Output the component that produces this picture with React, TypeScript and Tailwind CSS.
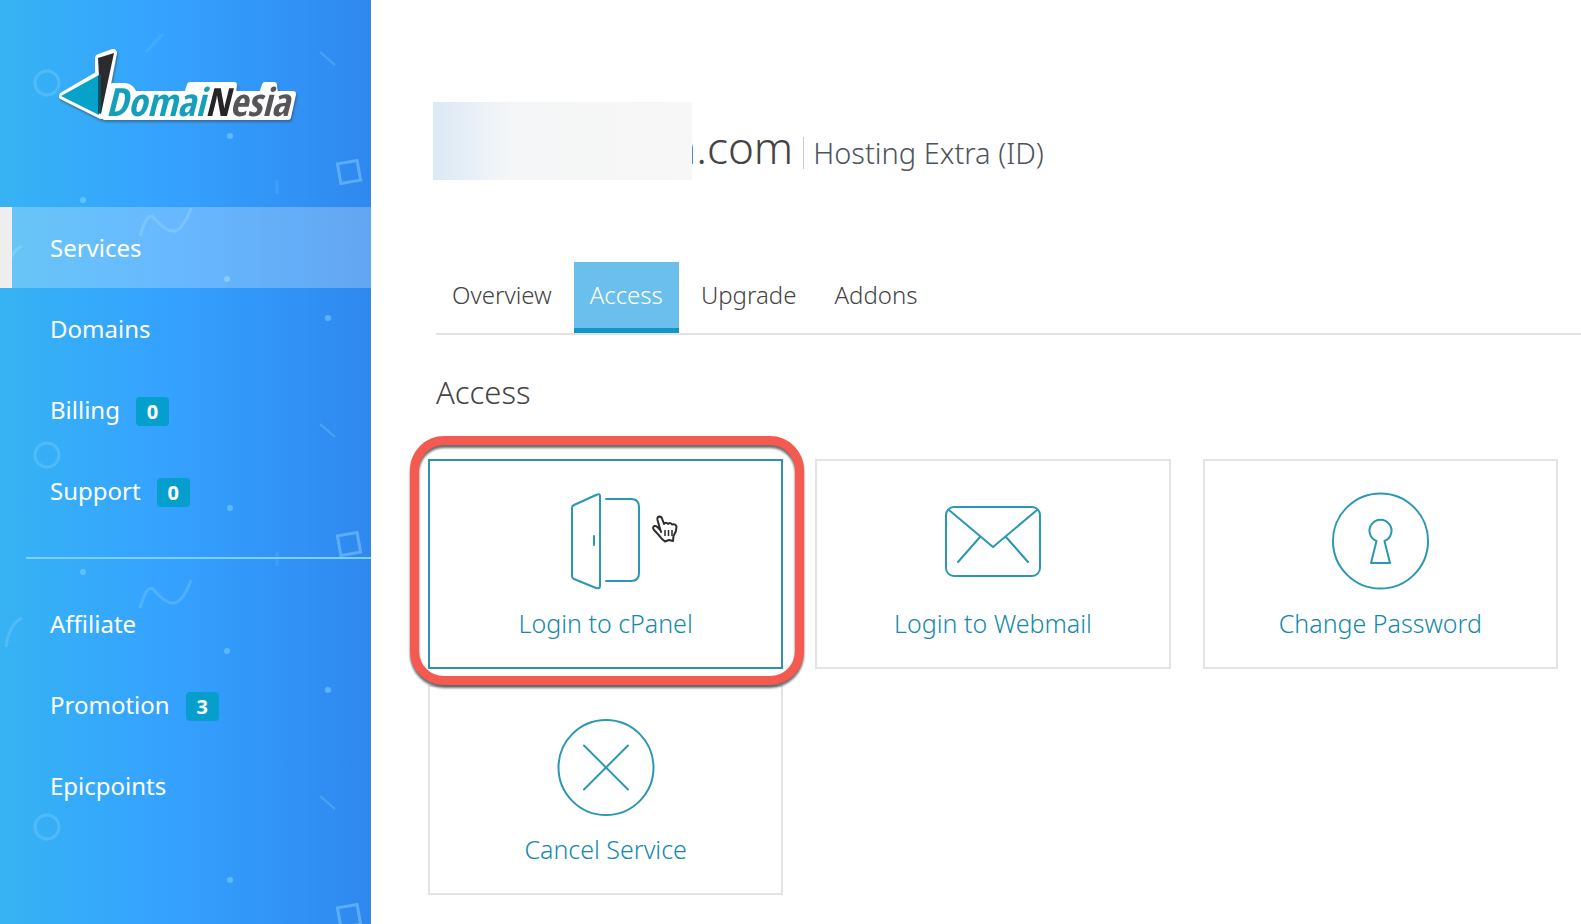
import React from 'react';
import clsx from 'clsx';

const MAIN_LINKS = [
  { label: 'Services', active: true },
  { label: 'Domains' },
  { label: 'Billing', count: 0 },
  { label: 'Support', count: 0 },
];

const EXTRA_LINKS = [
  { label: 'Affiliate' },
  { label: 'Promotion', count: 3 },
  { label: 'Epicpoints' },
];

const TABS = ['Overview', 'Access', 'Upgrade', 'Addons'];

const iconProps = {
  width: 98,
  height: 98,
  viewBox: '0 0 98 98',
  fill: 'none',
  stroke: '#2b97b3',
  strokeWidth: 2,
  strokeLinecap: 'round' as const,
  strokeLinejoin: 'round' as const,
  'aria-hidden': true,
};

const DoorIcon = () => (
  <svg {...iconProps}>
    <path d="M17 13 Q15 14 15 16 V84 Q15 86 17 87 L39 96 Q43 97 43 94 V4 Q43 1 39 3 Z" />
    <path d="M49 7 H74 Q82 7 82 15 V81 Q82 89 74 89 H49" />
    <path d="M37 44 V53" />
  </svg>
);

const MailIcon = () => (
  <svg {...iconProps}>
    <rect x="2" y="15" width="94" height="69" rx="8" />
    <path d="M5 18 L49 55 L93 18" />
    <path d="M36 45 L14 70 M62 45 L84 70" />
  </svg>
);

const KeyholeIcon = () => (
  <svg {...iconProps}>
    <circle cx="49.500" cy="49" r="47.500" />
    <path d="M45.500 49 A11 11 0 1 1 53.500 49 L59 71 H40 Z" />
  </svg>
);

const CancelIcon = () => (
  <svg {...iconProps}>
    <circle cx="49" cy="49.500" r="47.500" />
    <path d="M27 27.500 L71 71.500 M71 27.500 L27 71.500" />
  </svg>
);

const CARDS = [
  { label: 'Login to cPanel', icon: DoorIcon, highlighted: true },
  { label: 'Login to Webmail', icon: MailIcon },
  { label: 'Change Password', icon: KeyholeIcon },
  { label: 'Cancel Service', icon: CancelIcon },
];

// Faint shapes behind the menu, repeated down the sidebar
const SidebarPattern = () => (
  <svg className="absolute inset-0 h-full w-full" aria-hidden="true">
    <defs>
      <pattern id="shapes" width="371" height="372" patternUnits="userSpaceOnUse">
        <g fill="none" stroke="#8fd8ff" strokeWidth="3" strokeOpacity="0.28">
          <circle cx="47" cy="83" r="12" />
          <path d="M146 52 L163 34" strokeOpacity="0.15" />
          <path d="M320 52 L335 65" strokeWidth="2" />
          <path d="M277 180 V194" strokeOpacity="0.15" />
          <path d="M140 236 Q147 212 153 217 C162 227 168 232 175 231 Q184 228 191 208" />
          <path d="M6 275 Q9 252 22 246" />
          <rect x="339" y="162" width="20" height="20" transform="rotate(-10 349 172)" strokeOpacity="0.45" />
        </g>
        <g fill="#8fe0ff" fillOpacity="0.45">
          <circle cx="230" cy="136" r="3" />
          <circle cx="83" cy="200" r="3" />
          <circle cx="227" cy="279" r="3" />
          <circle cx="328" cy="318" r="3" />
        </g>
      </pattern>
    </defs>
    <rect width="100%" height="100%" fill="url(#shapes)" />
  </svg>
);

const Logo = () => (
  <svg width="260" height="96" viewBox="0 0 260 96" role="img" aria-label="DomaiNesia" className="drop-shadow-[1px_2px_1px_rgba(60,60,60,0.5)]">
    <path d="M8 50 L44 29 V12 L58 7 L46 69 Z" fill="#fff" stroke="#fff" strokeWidth="8" strokeLinejoin="round" />
    <path
      d="M58 40 H70 Q77 41 79 48 H132 L135 39 H179 L178 48 H207 L210 39 L219 39 L220 48 H238 L233 71 H50 Z"
      fill="#fff"
      stroke="#fff"
      strokeWidth="6"
      strokeLinejoin="round"
    />
    <path d="M6 50 L44 29 V69 Z" fill="#06a2c9" />
    <path d="M43 12 L59 7 L46 68 Z" fill="#2b2b2e" />
    <path d="M43 30 L46 28 V68 L43 67 Z" fill="#0b5264" />
    <text x="51" y="70" fontSize="39" fontWeight="700" fontStyle="italic" fontFamily="'Open Sans Condensed', 'Roboto Condensed', Roboto, sans-serif">
      <tspan fill="#159fbb">Domai</tspan><tspan fill="#252528">N</tspan><tspan fill="#55555a">esia</tspan>
    </text>
  </svg>
);

const HandCursor = () => (
  <svg className="absolute top-[54px] left-1/2 ml-[46px]" width="26" height="29" viewBox="0 0 26 29" aria-hidden="true">
    <path
      d="M9 17 L5.500 5 Q5 2 7.200 1.600 Q9.500 1.500 10.200 4 L12 9 Q14 6.500 16 9 Q18.500 7 20 9.500 Q24 8.500 24.500 12 Q24.500 17 21.500 21 L21 26 L17 25 L13 26.500 L10 24 Q7 20 2 15 Q0 12 2.500 11 Q5 10.500 8 15"
      fill="#fff"
      stroke="#2d2d2d"
      strokeWidth="2"
      strokeLinejoin="round"
      strokeLinecap="round"
    />
    <path d="M13 15 V21 M16.500 15 V21 M20 15 V21" stroke="#2d2d2d" strokeWidth="1.500" />
  </svg>
);

const NavItem = ({ label, count, active }: { label: string; count?: number; active?: boolean }) => (
  <li>
    <a
      href="#"
      aria-current={active ? 'page' : undefined}
      className={clsx(
        'flex h-[81px] items-center gap-4 border-l-12 pl-[38px] text-2xl text-white',
        active ? 'border-[#eeeeee] bg-white/25' : 'border-transparent'
      )}
    >
      <span>{label}</span>
      {count !== undefined && (
        <span className="mt-1 flex h-[29px] w-[33px] items-center justify-center rounded-sm bg-[#069fcd] text-xl font-bold">
          {count}
        </span>
      )}
    </a>
  </li>
);

const ServiceAccess = () => {
  return (
    <div className="flex min-h-screen bg-white font-['Noto_Sans','Open_Sans',sans-serif] text-[#444]">
      <aside className="relative w-[371px] shrink-0 bg-linear-to-r from-[#37b3f3] via-[#35a2ff] via-45% to-[#2f88ee]">
        <SidebarPattern />
        <div className="relative">
          <div className="h-[207px] pt-[46px] pl-[55px]">
            <Logo />
          </div>
          <nav>
            <ul>
              {MAIN_LINKS.map(link => (
                <NavItem key={link.label} {...link} />
              ))}
            </ul>
            <hr className="mt-[26px] mb-6 ml-[26px] border-t-2 border-[#7fd0ff]" />
            <ul>
              {EXTRA_LINKS.map(link => (
                <NavItem key={link.label} {...link} />
              ))}
            </ul>
          </nav>
        </div>
      </aside>

      <main className="min-w-0 flex-1 pt-[102px] pb-7">
        <div className="flex h-[78px] items-center pl-[62px]">
          {/* Account name stays hidden, only the end of the domain shows */}
          <div className="z-10 h-[78px] w-[259px] bg-linear-to-r from-[#dbe9f6] via-[#f5f6f7] via-30% to-[#f7f7f7]" />
          <h1 className="mt-3 -ml-[22px] text-[44px] leading-none font-light">n.com</h1>
          <p className="mt-6 ml-2.5 border-l border-[#ccc] pl-[9px] text-[29px] leading-8 font-light text-[#4b545c]">
            Hosting Extra (ID)
          </p>
        </div>

        <div role="tablist" className="mt-[82px] ml-[65px] flex gap-1.5 border-b-2 border-[#e2e2e2] text-2xl font-light">
          {TABS.map(tab => (
            <button
              key={tab}
              role="tab"
              type="button"
              aria-selected={tab === 'Access'}
              className={clsx(
                'h-[71px] border-b-5 px-4',
                tab === 'Access' ? 'border-[#1296c6] bg-[#6bbfec] text-white' : 'border-transparent'
              )}
            >
              {tab}
            </button>
          ))}
        </div>

        <h2 className="mt-[37px] ml-[65px] text-[31px] leading-10 font-light">Access</h2>

        <div className="mt-[47px] grid grid-cols-3 gap-x-8 gap-y-4 pr-[23px] pl-[57px]">
          {CARDS.map(({ label, icon: Icon, highlighted }) => (
            <a
              key={label}
              href="#"
              className={clsx(
                'relative flex h-[210px] flex-col items-center border-2 pt-[31px] text-[25px] leading-8 font-light text-[#1589ab]',
                highlighted ? 'border-[#2f93ad]' : 'border-[#e4e4e4]'
              )}
            >
              <Icon />
              <span className="mt-[17px]">{label}</span>
              {highlighted && (
                <>
                  <HandCursor />
                  <span className="absolute -top-[25px] -right-[23px] -bottom-[18px] -left-5 z-10 rounded-[34px] border-9 border-[#f55a50] drop-shadow-[0_3px_1px_rgba(60,60,60,0.75)]" />
                </>
              )}
            </a>
          ))}
        </div>
      </main>
    </div>
  );
};

export default ServiceAccess;
